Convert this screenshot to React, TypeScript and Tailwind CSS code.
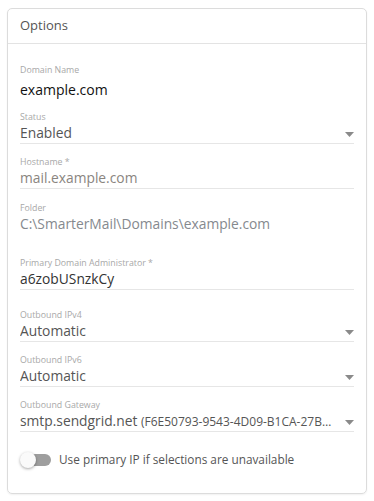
import React from 'react';

const font = { fontFamily: '"Open Sans", "Noto Sans", sans-serif' };

const Arrow = () => (
  <svg width="9" height="5" viewBox="0 0 9 5" className="shrink-0 mt-[2px]">
    <path d="M0 0h9L4.5 5z" fill="#8a8a8a" />
  </svg>
);

interface FieldProps {
  label: string;
  value: React.ReactNode;
  valueClass?: string;
  select?: boolean;
  className?: string;
}

const Field: React.FC<FieldProps> = ({ label, value, valueClass = 'text-[#555]', select, className = '' }) => (
  <div className={`border-b border-[#e6e6e6] ${className}`}>
    <div className="h-[12px] text-[8.8px] leading-[12px] text-[#a8a8a8]">{label}</div>
    <div className="h-[20px] flex items-center gap-2">
      <div className={`flex-1 min-w-0 whitespace-nowrap overflow-hidden text-[13.8px] leading-[20px] ${valueClass}`}>{value}</div>
      {select && <Arrow />}
    </div>
  </div>
);

export default function App() {
  return (
    <div className="w-[374px] h-[501px] bg-white pt-2 pl-[7px]" style={font}>
      <div className="w-[360px] h-[486px] border border-[#dcdcdc] rounded-[5px] shadow-[0_1px_2px_rgba(0,0,0,0.06)] flex flex-col">
        {/* Header */}
        <div className="h-[35px] border-b border-[#e3e3e3] flex items-center px-3 text-[13px] text-[#555]">
          Options
        </div>

        <div className="px-3 flex flex-col">
          {/* Domain Name */}
          <div className="mt-[20px]">
            <div className="h-[12px] text-[8.8px] leading-[12px] text-[#a8a8a8]">Domain Name</div>
            <div className="mt-1 h-[20px] text-[14px] leading-[20px] text-[#111]">example.com</div>
          </div>

          <Field className="mt-[11px]" label="Status" value="Enabled" select />
          <Field className="mt-[12px]" label="Hostname *" value="mail.example.com" valueClass="text-[#8a8580]" />

          {/* Folder */}
          <div className="mt-[13px]">
            <div className="h-[12px] text-[8.8px] leading-[12px] text-[#a8a8a8]">Folder</div>
            <div className="h-[20px] text-[13.8px] leading-[20px] text-[#85898e] whitespace-nowrap">
              C:\SmarterMail\Domains\example.com
            </div>
          </div>

          <Field className="mt-[23px]" label="Primary Domain Administrator *" value="a6zobUSnzkCy" valueClass="text-[#333]" />
          <Field className="mt-[19px]" label="Outbound IPv4" value="Automatic" select />
          <Field className="mt-[12px]" label="Outbound IPv6" value="Automatic" select />
          <Field
            className="mt-[12px]"
            label="Outbound Gateway"
            select
            value={
              <>
                smtp.sendgrid.net{' '}
                <span className="text-[12px]">(F6E50793-9543-4D09-B1CA-27B…</span>
              </>
            }
          />

          {/* Toggle */}
          <div className="mt-[20px] h-[16px] flex items-center gap-[8px]">
            <div className="relative w-[31px] h-[16px] flex items-center">
              <div className="w-[30px] h-[12px] ml-[1px] rounded-full bg-[#9e9e9e]" />
              <div className="absolute left-0 top-0 w-[16px] h-[16px] rounded-full bg-[#fafafa] shadow-[0_1px_3px_rgba(0,0,0,0.35)]" />
            </div>
            <span className="text-[11.8px] text-[#555]">Use primary IP if selections are unavailable</span>
          </div>
        </div>
      </div>
    </div>
  );
}
